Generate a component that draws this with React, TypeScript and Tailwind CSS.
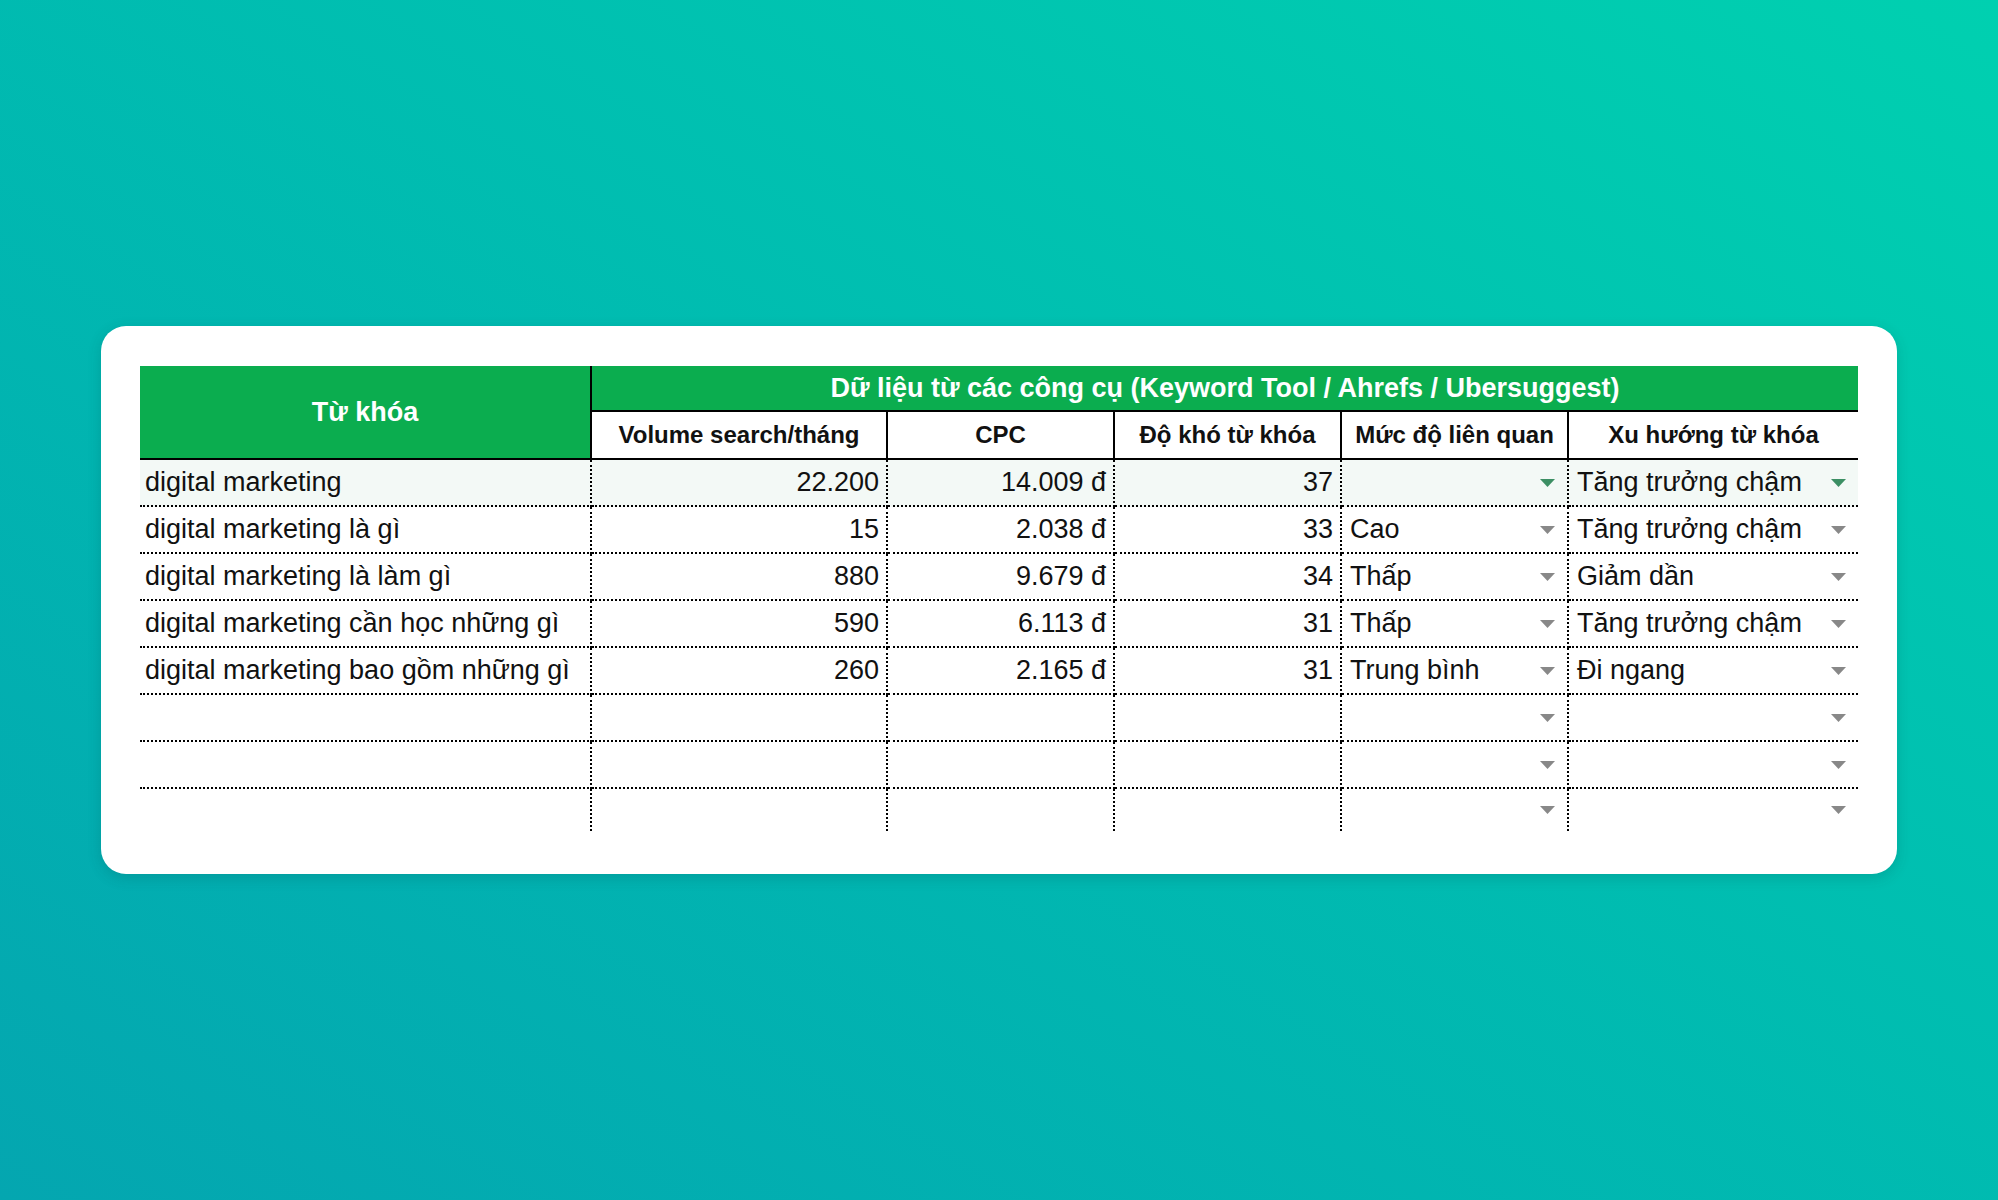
import React from "react";

type Row = {kw: string; vol: string; cpc: string; kd: string; rel: string; trend: string};

const rows: Row[] = [
    {kw: "digital marketing", vol: "22.200", cpc: "14.009 đ", kd: "37", rel: "", trend: "Tăng trưởng chậm"},
    {kw: "digital marketing là gì", vol: "15", cpc: "2.038 đ", kd: "33", rel: "Cao", trend: "Tăng trưởng chậm"},
    {kw: "digital marketing là làm gì", vol: "880", cpc: "9.679 đ", kd: "34", rel: "Thấp", trend: "Giảm dần"},
    {kw: "digital marketing cần học những gì", vol: "590", cpc: "6.113 đ", kd: "31", rel: "Thấp", trend: "Tăng trưởng chậm"},
    {kw: "digital marketing bao gồm những gì", vol: "260", cpc: "2.165 đ", kd: "31", rel: "Trung bình", trend: "Đi ngang"},
    {kw: "", vol: "", cpc: "", kd: "", rel: "", trend: ""},
    {kw: "", vol: "", cpc: "", kd: "", rel: "", trend: ""},
    {kw: "", vol: "", cpc: "", kd: "", rel: "", trend: ""},
];

const subHeads = ["Volume search/tháng", "CPC", "Độ khó từ khóa", "Mức độ liên quan", "Xu hướng từ khóa"];

function Caret({green}: {green?: boolean}) {
    return (
        <svg width="15" height="8" viewBox="0 0 15 8" className="shrink-0">
            <polygon points="0,0 15,0 7.5,8" fill={green ? "#3c8f64" : "#888888"} />
        </svg>
    );
}

export default function App() {
    return (
        <div className="h-screen w-full flex items-center justify-center bg-linear-to-tr from-[#04a6b0] to-[#00d0b0] font-['Liberation_Sans',Arial,sans-serif]">
            <div className="bg-white rounded-[25px] px-[39px] pt-10 pb-[43px] shadow-[0_4px_14px_rgba(0,60,60,0.18)]">
                <div className="grid grid-cols-[452px_296px_227px_227px_227px_289px] text-[#111]">
                    {/* header */}
                    <div className="row-span-2 bg-[#0bad4f] text-white font-bold text-[27px] flex items-center justify-center border-r-2 border-b-2 border-black">
                        Từ khóa
                    </div>
                    <div className="col-span-5 h-[46px] pt-px bg-[#0bad4f] text-white font-bold text-[27px] flex items-center justify-center border-b-2 border-black">
                        Dữ liệu từ các công cụ (Keyword Tool / Ahrefs / Ubersuggest)
                    </div>
                    {subHeads.map((h, i) => (
                        <div key={h} className={`h-[48px] bg-white font-bold text-[24px] flex items-center justify-center border-b-2 border-black ${i < 4 ? "border-r-2" : ""}`}>
                            {h}
                        </div>
                    ))}

                    {/* body */}
                    {rows.map((r, i) => {
                        const last = i === rows.length - 1;
                        const first = i === 0;
                        const base = `flex items-center text-[27px] border-dotted border-black ${last ? "h-[42px]" : "h-[47px] border-b-2"} ${first ? "bg-[#f3f9f6]" : ""}`;
                        return (
                            <React.Fragment key={i}>
                                <div className={`${base} border-r-2 pl-[5px]`}>{r.kw}</div>
                                <div className={`${base} border-r-2 justify-end pr-[7px]`}>{r.vol}</div>
                                <div className={`${base} border-r-2 justify-end pr-[7px]`}>{r.cpc}</div>
                                <div className={`${base} border-r-2 justify-end pr-[7px]`}>{r.kd}</div>
                                <div className={`${base} border-r-2 justify-between pl-[8px] pr-3`}>
                                    <span>{r.rel}</span>
                                    <Caret green={first} />
                                </div>
                                <div className={`${base} justify-between pl-[8px] pr-3`}>
                                    <span>{r.trend}</span>
                                    <Caret green={first} />
                                </div>
                            </React.Fragment>
                        );
                    })}
                </div>
            </div>
        </div>
    );
}
